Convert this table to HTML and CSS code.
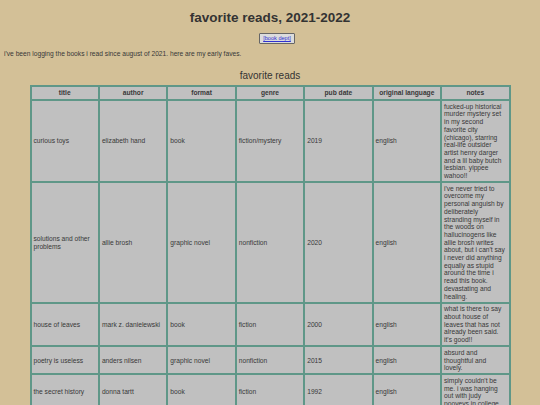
FILE: index.html
```html
<!DOCTYPE html>
<html>
<head>
<meta charset="utf-8">
<link rel="stylesheet" href="styles.css">
</head>
<body>
<h1 class="title">favorite reads, 2021-2022</h1>
<div class="btn-row"><button class="dept-btn"><a href="#">[book dept]</a></button></div>
<p class="intro">i've been logging the books i read since august of 2021. here are my early faves.</p>
<h2 class="caption">favorite reads</h2>
<table class="reads">
<thead>
<tr><th>title</th><th>author</th><th>format</th><th>genre</th><th>pub date</th><th>original language</th><th>notes</th></tr>
</thead>
<tbody>
<tr><td>curious toys</td><td>elizabeth hand</td><td>book</td><td>fiction/mystery</td><td>2019</td><td>english</td><td>fucked-up historical murder mystery set in my second favorite city (chicago), starring real-life outsider artist henry darger and a lil baby butch lesbian. yippee wahoo!!</td></tr>
<tr><td>solutions and other problems</td><td>allie brosh</td><td>graphic novel</td><td>nonfiction</td><td>2020</td><td>english</td><td>i've never tried to overcome my personal anguish by deliberately stranding myself in the woods on hallucinogens like allie brosh writes about, but i can't say i never did anything equally as stupid around the time i read this book. devastating and healing.</td></tr>
<tr><td>house of leaves</td><td>mark z. danielewski</td><td>book</td><td>fiction</td><td>2000</td><td>english</td><td>what is there to say about house of leaves that has not already been said. it's good!!</td></tr>
<tr><td>poetry is useless</td><td>anders nilsen</td><td>graphic novel</td><td>nonfiction</td><td>2015</td><td>english</td><td>absurd and thoughtful and lovely.</td></tr>
<tr><td>the secret history</td><td>donna tartt</td><td>book</td><td>fiction</td><td>1992</td><td>english</td><td>simply couldn't be me. i was hanging out with judy pooveys in college.</td></tr>
</tbody>
</table>
</body>
</html>
```

FILE: styles.css
```css
html {
  background: #d3c097;
}
body {
  margin: 4px;
  font-family: "Liberation Sans", Arial, sans-serif;
  font-size: 6.67px;
  color: #383838;
}
.title {
  margin: 5.5px 0 0;
  text-align: center;
  font-size: 13.5px;
  font-weight: bold;
  color: #333;
}
.btn-row {
  margin-top: 8px;
  padding-left: 14px;
  text-align: center;
}
.dept-btn {
  font-family: "Liberation Sans", Arial, sans-serif;
  font-size: 5.6px;
  height: 11px;
  padding: 0 3px;
  background: #dcdcdc;
  border: 1px solid #666;
  border-radius: 1px;
  vertical-align: top;
}
.dept-btn a {
  color: #3030d0;
}
.intro {
  margin: 6px 0 0;
}
.caption {
  margin: 13px 0 0;
  text-align: center;
  font-size: 10px;
  font-weight: normal;
  color: #333;
}
.reads {
  margin: 4px auto 0;
  width: 481px;
  table-layout: fixed;
  border-collapse: collapse;
  border: 2px solid #5f9788;
}
.reads th,
.reads td {
  background: #c0c0c0;
  border: 2px solid #5f9788;
  padding: 1.5px 3.5px 1.5px 2px;
  vertical-align: middle;
  font-size: 6.67px;
  line-height: 7.7px;
}
.reads th {
  font-weight: bold;
  text-align: center;
  padding: 2.5px 2px;
}
.reads td {
  text-align: left;
}
```
